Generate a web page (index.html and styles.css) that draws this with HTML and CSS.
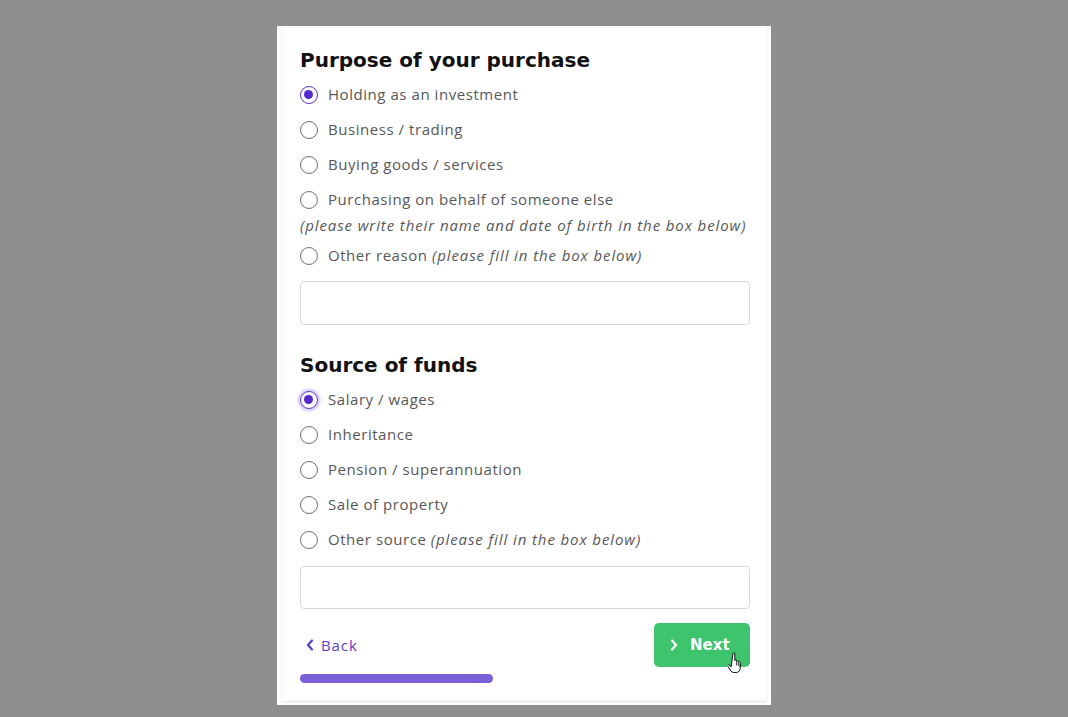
FILE: index.html
```html
<!DOCTYPE html>
<html>
<head>
<meta charset="utf-8">
<link rel="stylesheet" href="styles.css">
</head>
<body>
<div class="panel">
  <div class="card">
    <h2 class="title">Purpose of your purchase</h2>
    <div class="opt"><span class="radio checked"></span><span class="lbl">Holding as an investment</span></div>
    <div class="opt"><span class="radio"></span><span class="lbl">Business / trading</span></div>
    <div class="opt"><span class="radio"></span><span class="lbl">Buying goods / services</span></div>
    <div class="opt"><span class="radio"></span><span class="lbl">Purchasing on behalf of someone else</span></div>
    <div class="note">(please write their name and date of birth in the box below)</div>
    <div class="opt opt-after-note"><span class="radio"></span><span class="lbl">Other reason <em>(please fill in the box below)</em></span></div>
    <div class="field field-1"></div>

    <h2 class="title title-2">Source of funds</h2>
    <div class="opt"><span class="radio checked focus"></span><span class="lbl">Salary / wages</span></div>
    <div class="opt"><span class="radio"></span><span class="lbl">Inheritance</span></div>
    <div class="opt"><span class="radio"></span><span class="lbl">Pension / superannuation</span></div>
    <div class="opt"><span class="radio"></span><span class="lbl">Sale of property</span></div>
    <div class="opt"><span class="radio"></span><span class="lbl">Other source <em>(please fill in the box below)</em></span></div>
    <div class="field field-2"></div>

    <div class="footer">
      <a class="back"><svg width="8" height="12" viewBox="0 0 8 12"><path d="M6 1.5 L2 6 L6 10.5" fill="none" stroke="#5b3fc4" stroke-width="2.2" stroke-linecap="round" stroke-linejoin="round"/></svg>Back</a>
      <button class="next"><svg width="8" height="12" viewBox="0 0 8 12"><path d="M2 1.5 L6 6 L2 10.5" fill="none" stroke="#ffffff" stroke-width="2.2" stroke-linecap="round" stroke-linejoin="round"/></svg>Next
        <svg class="cursor" width="18" height="24" viewBox="0 0 18 24"><path d="M5 2.5c0-1 1.8-1 1.8 0v7c0-1 1.8-1 1.8 0v1c0-1 1.8-1 1.8 0v1c0-1 1.8-1 1.8 0v5.5c0 2.5-1.5 4.5-4 4.5h-2c-2 0-3-1-4-2.5l-2.5-4c-.6-1 .6-1.9 1.4-1.1l2 2z" fill="#fff" stroke="#111" stroke-width="1" stroke-linejoin="round"/><path d="M8.6 11v3.5M10.4 12v3M12.2 13v2.5" stroke="#111" stroke-width=".8"/></svg>
      </button>
    </div>
    <div class="progress"></div>
  </div>
</div>
</body>
</html>
```

FILE: styles.css
```css
html, body {
  margin: 0;
  padding: 0;
}
body {
  background: #8f8f8f;
  height: 717px;
  overflow: hidden;
  font-family: "Open Sans", "DejaVu Sans", sans-serif;
}
.panel {
  margin: 26px 0 0 277px;
  width: 494px;
  height: 679px;
  background: #ffffff;
  padding: 0 4px 4px 5px;
  box-sizing: border-box;
}
.card {
  background: #fff;
  height: 675px;
  box-shadow: 0 1px 2px rgba(0,0,0,0.12);
  padding: 19px 16px 0 18px;
  box-sizing: border-box;
  display: flex;
  flex-direction: column;
}
.title {
  margin: 0 0 2.5px 0;
  font-family: "DejaVu Sans", sans-serif;
  font-weight: bold;
  font-size: 20px;
  line-height: 30px;
  color: #111;
  letter-spacing: 0;
}
.title-2 {
  margin-top: 25px;
}
.opt {
  height: 35px;
  display: flex;
  align-items: center;
}
.radio {
  width: 18px;
  height: 18px;
  border: 1.5px solid #6f6f6f;
  border-radius: 50%;
  box-sizing: border-box;
  flex: none;
  margin-right: 10px;
  position: relative;
}
.radio.checked {
  border-color: #5a32c8;
}
.radio.checked::after {
  content: "";
  position: absolute;
  left: 3px;
  top: 3px;
  width: 9px;
  height: 9px;
  border-radius: 50%;
  background: #5428cf;
}
.radio.focus {
  box-shadow: 0 0 3px 2px rgba(122, 80, 240, 0.35);
}
.lbl {
  font-size: 15px;
  line-height: 20px;
  margin-top: -2px;
  color: #585858;
  letter-spacing: 0.55px;
}
.lbl em, .note {
  font-style: italic;
}
.lbl em {
  letter-spacing: 0.9px;
}
.note {
  margin-top: -3px;
  font-size: 15px;
  line-height: 20px;
  color: #585858;
  letter-spacing: 0.9px;
}
.opt-after-note {
  margin-top: 4px;
}
.field {
  width: 450px;
  border: 1px solid #d9d9d9;
  border-radius: 4px;
  box-sizing: border-box;
  flex: none;
}
.field-1 {
  height: 44px;
  margin-top: 7.5px;
}
.field-2 {
  height: 43px;
  margin-top: 8.5px;
}
.footer {
  width: 450px;
  margin-top: 14px;
  display: flex;
  justify-content: space-between;
  align-items: center;
}
.back {
  display: flex;
  align-items: center;
  gap: 7px;
  font-size: 15px;
  color: #5b3fc4;
  letter-spacing: 0.9px;
  padding-left: 6px;
}
.next {
  position: relative;
  width: 96px;
  height: 44px;
  border: none;
  border-radius: 5px;
  background: #3dc46c;
  color: #fff;
  font-family: "DejaVu Sans", sans-serif;
  font-weight: bold;
  font-size: 15px;
  display: flex;
  align-items: center;
  padding: 0 0 0 16px;
  gap: 12px;
}
.cursor {
  position: absolute;
  left: 74px;
  top: 28px;
}
.progress {
  margin-top: 7px;
  width: 193px;
  height: 9px;
  border-radius: 5px;
  background: #7b5fd6;
}
```
